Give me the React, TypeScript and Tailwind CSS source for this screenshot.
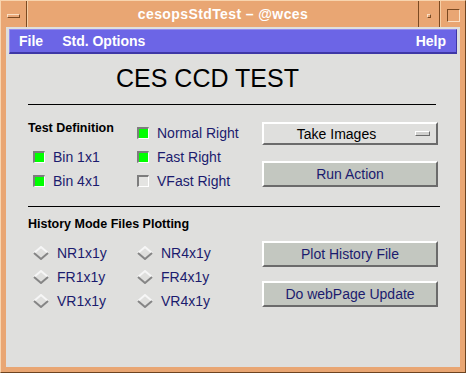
import React from 'react';

const labelText = 'text-[14px] leading-[16px] text-[#1b1b6e]';

const Checkbox: React.FC<{ checked: boolean }> = ({ checked }) => (
    <span
        className={`block w-[12px] h-[12px] shrink-0 border-t-2 border-l-2 border-b border-r border-t-[#7d7d7d] border-l-[#7d7d7d] border-b-white border-r-white ${checked ? 'bg-[#00ff00]' : 'bg-[#e4e4e2]'}`}
    />
);

const Diamond: React.FC = () => (
    <svg width="16" height="14" viewBox="0 0 16 14" className="shrink-0">
        <polyline points="1,7 8,1 15,7" fill="none" stroke="#f6f6f6" strokeWidth="2" />
        <polyline points="1,7 8,13 15,7" fill="none" stroke="#858585" strokeWidth="2" />
    </svg>
);

const CheckRow: React.FC<{ label: string; checked: boolean; pad?: boolean }> = ({ label, checked, pad }) => (
    <div className={`h-[24px] flex items-center gap-[8px] ${pad ? 'pl-[5px]' : ''}`}>
        <Checkbox checked={checked} />
        <span className={labelText}>{label}</span>
    </div>
);

const RadioRow: React.FC<{ label: string; pad?: boolean }> = ({ label, pad }) => (
    <div className={`h-[24px] flex items-center gap-[8px] ${pad ? 'pl-[5px]' : ''}`}>
        <Diamond />
        <span className={labelText}>{label}</span>
    </div>
);

const PushButton: React.FC<{ label: string; className?: string }> = ({ label, className }) => (
    <button
        className={`w-[176px] h-[26px] flex items-center justify-center bg-[#c3c7c0] border-t-2 border-l-2 border-b-2 border-r-2 border-t-white border-l-white border-b-[#6b6b6b] border-r-[#6b6b6b] ${labelText} ${className ?? ''}`}
    >
        {label}
    </button>
);

export default function App() {
    return (
        <div className="w-[466px] h-[373px] flex flex-col bg-[#e9a673] border-t border-l border-t-[#f8d4ae] border-l-[#f8d4ae] border-b border-r border-b-[#6e4420] border-r-[#6e4420] font-['Liberation_Sans',Arial,sans-serif]">
            {/* window title bar */}
            <div className="h-[26px] flex shrink-0">
                <div className="w-[26px] border-r border-[#7b4a22] flex items-center justify-center">
                    <span className="block w-[13px] h-[4px] bg-[#eaa878] border-t border-l border-b border-r border-t-[#fbe0c4] border-l-[#fbe0c4] border-b-[#7b4a22] border-r-[#7b4a22] mt-[4px]" />
                </div>
                <div className="flex-1 flex items-center justify-center border-l border-[#f6cfa6] pt-[1px]">
                    <span className="text-white text-[14px] font-bold tracking-[0.4px]">cesopsStdTest – @wces</span>
                </div>
                <div className="w-[22px] border-l border-r border-l-[#7b4a22] border-r-[#7b4a22] flex items-center justify-center">
                    <span className="block w-[4px] h-[4px] bg-[#eaa878] border-t border-l border-b border-r border-t-[#fbe0c4] border-l-[#fbe0c4] border-b-[#7b4a22] border-r-[#7b4a22] mt-[3px]" />
                </div>
                <div className="flex-1 max-w-[25px] flex items-center justify-center border-l border-[#f6cfa6]">
                    <span className="block w-[13px] h-[13px] border-t border-l border-b border-r border-t-[#7b4a22] border-l-[#7b4a22] border-b-[#fbe0c4] border-r-[#fbe0c4] mt-[3px]" />
                </div>
            </div>

            {/* client area */}
            <div className="flex-1 flex px-[5px] pb-[5px]">
                <div className="flex-1 flex flex-col bg-[#dfdfdd] pt-[2px] px-[3px]">
                    <div className="h-[25px] flex items-center bg-[#6c65e6] border-t border-l border-t-[#938df0] border-l-[#938df0] border-b-2 border-r border-b-[#3e37a6] border-r-[#3e37a6] text-white text-[14px] font-bold">
                        <span className="ml-[9px]">File</span>
                        <span className="ml-[19px]">Std. Options</span>
                        <span className="ml-auto mr-[10px]">Help</span>
                    </div>

                    <div className="flex flex-col pl-[19px]">
                        <h1 className="ml-[88px] mt-[9px] text-[25px] leading-[30px] text-black">CES CCD TEST</h1>
                        <div className="mt-[11px] w-[408px] h-px bg-black" />

                        {/* test definition */}
                        <div className="pt-[16px] flex">
                            <div className="w-[109px] flex flex-col">
                                <div className="h-[24px] text-[12.5px] leading-[15px] font-bold text-black">Test Definition</div>
                                <CheckRow label="Bin 1x1" checked pad />
                                <CheckRow label="Bin 4x1" checked pad />
                            </div>
                            <div className="w-[125px] flex flex-col">
                                <CheckRow label="Normal Right" checked />
                                <CheckRow label="Fast Right" checked />
                                <CheckRow label="VFast Right" checked={false} />
                            </div>
                            <div className="w-[176px] flex flex-col">
                                <button className="mt-[1px] w-[176px] h-[23px] flex items-center bg-[#dfdfdd] border-t-2 border-l-2 border-b-2 border-r-2 border-t-white border-l-white border-b-[#6b6b6b] border-r-[#6b6b6b] text-[14px] leading-[16px] text-black">
                                    <span className="flex-1 text-center">Take Images</span>
                                    <span className="block w-[15px] h-[5px] ml-[6px] mr-[6px] bg-[#d0d0ce] border-t border-l border-b border-r border-t-white border-l-white border-b-[#6b6b6b] border-r-[#6b6b6b]" />
                                </button>
                                <PushButton label="Run Action" className="mt-[16px]" />
                            </div>
                        </div>

                        <div className="mt-[13px] w-[412px] h-px bg-black" />

                        {/* history plotting */}
                        <div className="mt-[10px] h-[15px] text-[12.5px] leading-[15px] font-bold text-black">History Mode Files Plotting</div>
                        <div className="mt-[9px] flex">
                            <div className="w-[109px] flex flex-col">
                                <RadioRow label="NR1x1y" pad />
                                <RadioRow label="FR1x1y" pad />
                                <RadioRow label="VR1x1y" pad />
                            </div>
                            <div className="w-[125px] flex flex-col">
                                <RadioRow label="NR4x1y" />
                                <RadioRow label="FR4x1y" />
                                <RadioRow label="VR4x1y" />
                            </div>
                            <div className="w-[176px] flex flex-col">
                                <PushButton label="Plot History File" />
                                <PushButton label="Do webPage Update" className="mt-[14px]" />
                            </div>
                        </div>
                    </div>
                </div>
            </div>
        </div>
    );
}
